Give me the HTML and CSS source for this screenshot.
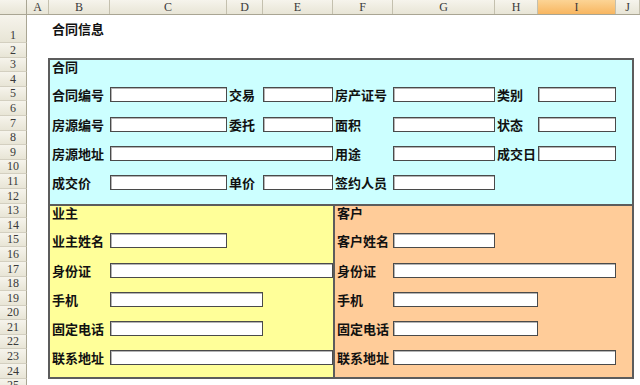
FILE: index.html
```html
<!DOCTYPE html>
<html lang="zh-CN">
<head>
    <meta charset="UTF-8">
    <title>合同信息</title>
    <link rel="stylesheet" href="styles.css">
</head>
<body>

<div class="sheet">
    <div class="corner"></div>

    <div class="col-heads">
        <div>A</div><div>B</div><div>C</div><div>D</div><div>E</div>
        <div>F</div><div>G</div><div>H</div><div class="selected">I</div><div>J</div>
    </div>

    <div class="row-heads">
        <div>1</div><div>2</div><div>3</div><div>4</div><div>5</div>
        <div>6</div><div>7</div><div>8</div><div>9</div><div>10</div>
        <div>11</div><div>12</div><div>13</div><div>14</div><div>15</div>
        <div>16</div><div>17</div><div>18</div><div>19</div><div>20</div>
        <div>21</div><div>22</div><div>23</div><div>24</div><div>25</div>
    </div>

    <div class="cells">
        <h4 class="title">合同信息</h4>

        <div class="form">
            <!-- 合同 -->
            <section class="deal">
                <div class="sec-title">合同</div>
                <div class="field-row">
                    <label>合同编号</label><input type="text">
                    <label>交易</label><input type="text">
                    <label>房产证号</label><input type="text">
                    <label>类别</label><input type="text">
                </div>
                <div class="field-row">
                    <label>房源编号</label><input type="text">
                    <label>委托</label><input type="text">
                    <label>面积</label><input type="text">
                    <label>状态</label><input type="text">
                </div>
                <div class="field-row">
                    <label>房源地址</label><input type="text" class="span-3">
                    <label>用途</label><input type="text">
                    <label>成交日</label><input type="text">
                </div>
                <div class="field-row">
                    <label>成交价</label><input type="text">
                    <label>单价</label><input type="text">
                    <label>签约人员</label><input type="text">
                </div>
            </section>

            <div class="parties">
                <!-- 业主 -->
                <section class="owner">
                    <div class="sec-title">业主</div>
                    <div class="field-row"><label>业主姓名</label><input type="text" class="w-short"></div>
                    <div class="field-row"><label>身份证</label><input type="text" class="w-long"></div>
                    <div class="field-row"><label>手机</label><input type="text" class="w-mid"></div>
                    <div class="field-row"><label>固定电话</label><input type="text" class="w-mid"></div>
                    <div class="field-row"><label>联系地址</label><input type="text" class="w-long"></div>
                </section>

                <!-- 客户 -->
                <section class="client">
                    <div class="sec-title">客户</div>
                    <div class="field-row"><label>客户姓名</label><input type="text" class="w-short"></div>
                    <div class="field-row"><label>身份证</label><input type="text" class="w-long"></div>
                    <div class="field-row"><label>手机</label><input type="text" class="w-mid"></div>
                    <div class="field-row"><label>固定电话</label><input type="text" class="w-mid"></div>
                    <div class="field-row"><label>联系地址</label><input type="text" class="w-long"></div>
                </section>
            </div>
        </div>
    </div>
</div>

</body>
</html>
```

FILE: styles.css
```css
:root {
    --head-bg: linear-gradient(#f6f4ec, #e8e5d6);
    --head-line: #c4c0ae;
    --head-edge: #a9a593;
    --frame: #5c5c5c;
    --deal-color: #ccffff;
    --owner-color: #ffff99;
    --client-color: #ffcc99;
}
* { box-sizing: border-box; }
body {
    margin: 0;
    width: 640px;
    height: 385px;
    overflow: hidden;
    background: #fff;
    font-family: "Noto Sans CJK SC", sans-serif;
    color: #111;
}
.sheet {
    display: grid;
    grid-template-columns: 27px 613px;
    grid-template-rows: 15px auto;
}
.corner {
    background: var(--head-bg);
    border-right: 1px solid var(--head-edge);
    border-bottom: 1px solid var(--head-edge);
}

/* column letters */
.col-heads {
    display: grid;
    grid-template-columns: 22px 61px 117px 36px 70px 60px 102px 43px 78px 24px;
    background: var(--head-bg);
    border-bottom: 1px solid var(--head-edge);
}
.col-heads div {
    border-right: 1px solid var(--head-line);
    text-align: center;
    font: 12px/14px "Liberation Serif", serif;
    color: #3a3a3a;
}
.col-heads .selected { background: linear-gradient(#fcd495, #f8b660); }

/* row numbers */
.row-heads {
    display: grid;
    grid-template-rows: 28px repeat(24, 14.6px);
}
.row-heads div {
    display: flex;
    align-items: flex-end;
    justify-content: center;
    background: var(--head-bg);
    border-right: 1px solid var(--head-edge);
    border-bottom: 1px solid #d3cfc0;
    font: 12px/13px "Liberation Serif", serif;
    color: #3a3a3a;
}

.cells {
    display: grid;
    grid-template-columns: 22px 61px 117px 36px 70px 60px 102px 43px 78px 24px;
    grid-template-rows: 28px repeat(24, 14.6px);
}
.title {
    grid-row: 1;
    grid-column: 2 / span 3;
    align-self: center;
    margin: 0;
    padding-left: 3px;
    font-size: 13px;
    line-height: 14px;
    font-weight: bold;
}

.form {
    grid-row: 3 / 25;
    grid-column: 2 / -1;
    margin: 0 6px 0 -1px;
    border: 2px solid var(--frame);
    display: grid;
    grid-template-rows: 146px 1fr;
}
.deal { background: var(--deal-color); border-bottom: 2px solid var(--frame); }
.parties { display: grid; grid-template-columns: 285px 1fr; }
.owner { background: var(--owner-color); border-right: 2px solid var(--frame); }
.client { background: var(--client-color); }

.sec-title {
    height: 12.6px;
    padding-left: 2px;
    font-size: 13px;
    line-height: 13px;
    font-weight: bold;
}
.field-row {
    display: grid;
    height: 29.2px;
    align-items: end;
    justify-content: start;
}
.deal .field-row { grid-template-columns: 60px 117px 36px 70px 60px 102px 43px 78px; }
.owner .field-row { grid-template-columns: 60px auto; }
.client .field-row { grid-template-columns: 58px auto; }

label {
    margin-bottom: -1px;
    padding-left: 2px;
    font-size: 13px;
    line-height: 15px;
    font-weight: bold;
    white-space: nowrap;
}
input {
    width: 100%;
    height: 15px;
    margin: 0 0 -1px;
    padding: 0;
    border: 1px solid #4a4a4a;
    background: #fff;
    box-shadow: inset 1px 1px 0 #b4b4b4;
    font: inherit;
}
.span-3 { grid-column: span 3; }
.owner .w-short { width: 117px; }
.owner .w-mid { width: 153px; }
.owner .w-long { width: 223px; }
.client .w-short { width: 102px; }
.client .w-mid { width: 145px; }
.client .w-long { width: 223px; }
```
